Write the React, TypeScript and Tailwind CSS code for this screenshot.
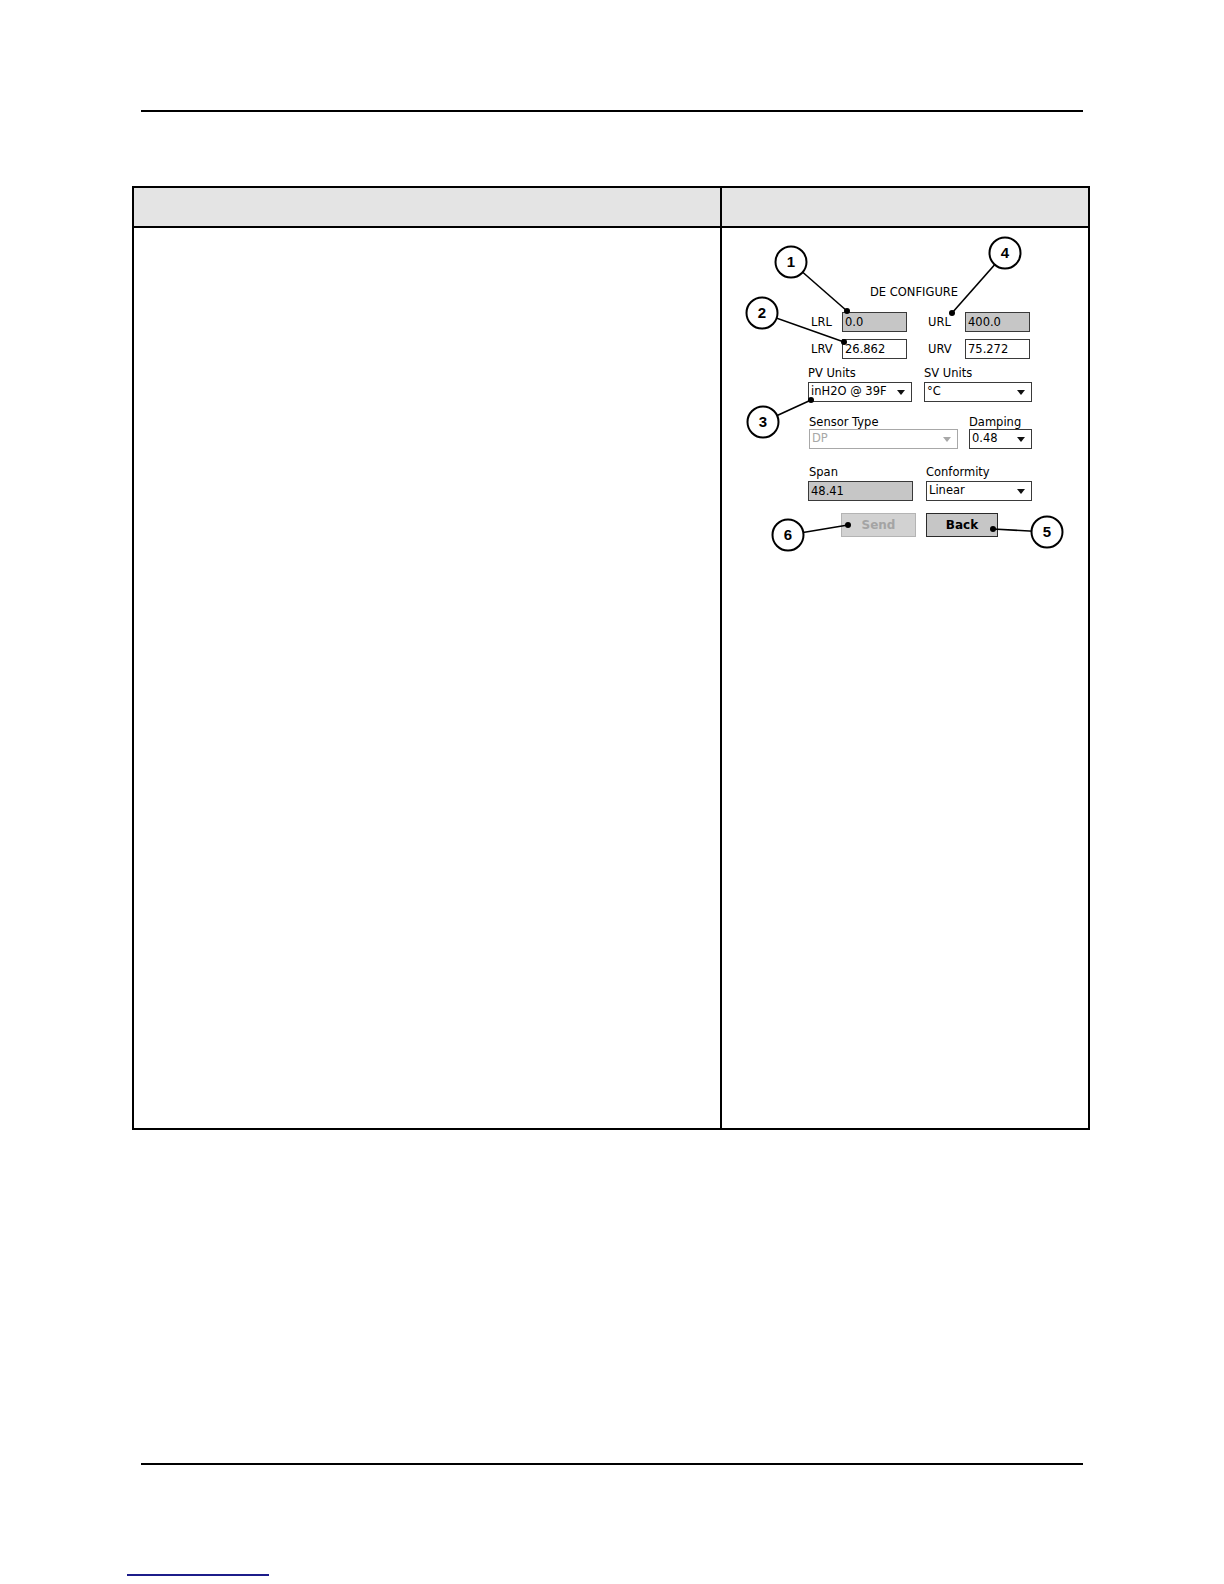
import React from "react";

const formFont = { fontFamily: '"DejaVu Sans", Verdana, sans-serif' };

const Label = ({ text, className = "" }: { text: string; className?: string }) => (
  <div className={`h-[14px] leading-[14px] text-[11.5px] text-black whitespace-nowrap ${className}`}>{text}</div>
);

const Field = ({
  value,
  className = "",
  readOnly = false,
}: {
  value: string;
  className?: string;
  readOnly?: boolean;
}) => (
  <div
    className={`h-[20px] border border-[#3a3a3a] pl-[2px] text-[11.5px] leading-[18px] text-black ${
      readOnly ? "bg-[#c6c6c6]" : "bg-white"
    } ${className}`}
  >
    {value}
  </div>
);

const Select = ({
  value,
  className = "",
  disabled = false,
}: {
  value: string;
  className?: string;
  disabled?: boolean;
}) => (
  <div
    className={`h-[20px] flex items-center justify-between bg-white border pl-[2px] pr-[6px] text-[11.5px] ${
      disabled ? "border-[#a8a8a8] text-[#a8a8a8]" : "border-[#3a3a3a] text-black"
    } ${className}`}
  >
    <span className="whitespace-nowrap">{value}</span>
    <svg width="8" height="5" viewBox="0 0 8 5">
      <path d="M0 0h8L4 5z" fill={disabled ? "#a8a8a8" : "#111"} />
    </svg>
  </div>
);

// callouts: page coordinates, drawn over the form
const callouts = [
  { n: "1", cx: 791, cy: 262, dx: 847, dy: 311 },
  { n: "4", cx: 1005, cy: 253, dx: 952, dy: 313 },
  { n: "2", cx: 762, cy: 313, dx: 844, dy: 342 },
  { n: "3", cx: 763, cy: 422, dx: 811, dy: 400 },
  { n: "6", cx: 788, cy: 535, dx: 848, dy: 525 },
  { n: "5", cx: 1047, cy: 532, dx: 993, dy: 529 },
];

const ConfigureScreen = () => (
  <div className="relative h-full" style={formFont}>
    <div className="pl-[86px] pt-[57px]">
      <Label text="DE CONFIGURE" className="ml-[62px]" />

      <div className="flex items-center mt-[13px]">
        <Label text="LRL" className="ml-[3px] w-[31px]" />
        <Field value="0.0" readOnly className="w-[65px]" />
        <Label text="URL" className="ml-[21px] w-[37px]" />
        <Field value="400.0" readOnly className="w-[65px]" />
      </div>

      <div className="flex items-center mt-[7px]">
        <Label text="LRV" className="ml-[3px] w-[31px]" />
        <Field value="26.862" className="w-[65px]" />
        <Label text="URV" className="ml-[21px] w-[37px]" />
        <Field value="75.272" className="w-[65px]" />
      </div>

      <div className="flex mt-[7px]">
        <Label text="PV Units" className="w-[116px]" />
        <Label text="SV Units" />
      </div>
      <div className="flex mt-[2px]">
        <Select value="inH2O @ 39F" className="w-[104px]" />
        <Select value="°C" className="ml-[12px] w-[108px]" />
      </div>

      <div className="flex mt-[13px]">
        <Label text="Sensor Type" className="ml-[1px] w-[160px]" />
        <Label text="Damping" />
      </div>
      <div className="flex">
        <Select value="DP" disabled className="ml-[1px] w-[149px]" />
        <Select value="0.48" className="ml-[11px] w-[63px]" />
      </div>

      <div className="flex mt-[16px]">
        <Label text="Span" className="ml-[1px] w-[117px]" />
        <Label text="Conformity" />
      </div>
      <div className="flex mt-[2px]">
        <Field value="48.41" readOnly className="w-[105px]" />
        <Select value="Linear" className="ml-[13px] w-[106px]" />
      </div>

      <div className="flex mt-[12px]">
        <div className="ml-[33px] w-[75px] h-[24px] flex items-center justify-center bg-[#d2d2d2] border border-[#b4b4b4] text-[12px] font-bold text-[#a4a4a4]">
          Send
        </div>
        <div className="ml-[10px] w-[72px] h-[24px] flex items-center justify-center bg-[#c6c6c6] border border-[#2a2a2a] text-[12px] font-bold text-black">
          Back
        </div>
      </div>
    </div>

    <svg
      className="absolute inset-0 w-full h-full pointer-events-none"
      viewBox="722 228 366 900"
    >
      {callouts.map((c) => (
        <g key={c.n}>
          <line x1={c.cx} y1={c.cy} x2={c.dx} y2={c.dy} stroke="#000" strokeWidth="1.6" />
          <circle cx={c.dx} cy={c.dy} r="3" fill="#000" />
          <circle cx={c.cx} cy={c.cy} r="15.5" fill="#fff" stroke="#000" strokeWidth="2" />
          <text
            x={c.cx}
            y={c.cy + 5}
            textAnchor="middle"
            fontSize="15"
            fontWeight="bold"
            fontFamily='"Liberation Sans", Arial, sans-serif'
          >
            {c.n}
          </text>
        </g>
      ))}
    </svg>
  </div>
);

export default function App() {
  return (
    <div className="relative w-[1224px] h-[1584px] bg-white overflow-hidden">
      <div className="pt-[110px]">
        <div className="ml-[141px] w-[942px] h-[2px] bg-black" />
      </div>

      <div className="mt-[74px] ml-[132px] w-[958px] border-2 border-black">
        <div className="grid grid-cols-[588px_1fr] h-[40px] bg-[#e4e4e4] border-b-2 border-black">
          <div className="border-r-2 border-black" />
          <div />
        </div>
        <div className="grid grid-cols-[588px_1fr] h-[900px]">
          <div className="border-r-2 border-black" />
          <ConfigureScreen />
        </div>
      </div>

      <div className="mt-[333px] ml-[141px] w-[942px] h-[2px] bg-black" />

      <div className="mt-[109px] ml-[127px] w-[142px] h-[1.5px] bg-[#1c1c8a]" />
    </div>
  );
}
